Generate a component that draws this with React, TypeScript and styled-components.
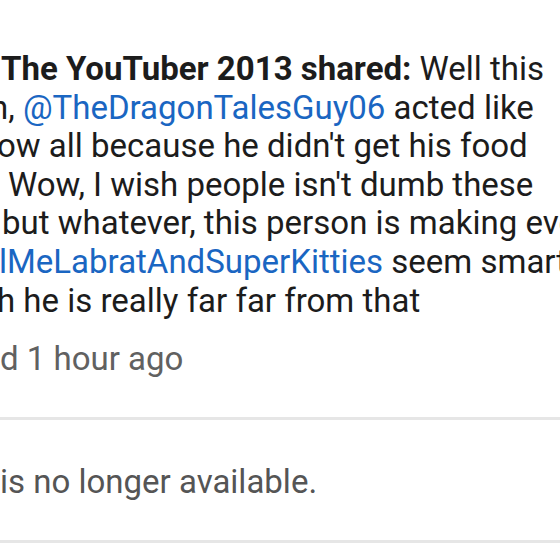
import React from "react";
import styled, { createGlobalStyle } from "styled-components";

const Global = createGlobalStyle`
  html, body { margin: 0; padding: 0; background: #ffffff; }
  body { width: 560px; height: 560px; overflow: hidden; }
`;

const Page = styled.div`
  width: 560px;
  height: 560px;
  overflow: hidden;
  background: #ffffff;
  font-family: Roboto, "Noto Sans", sans-serif;
  font-size: 33px;
  line-height: 38.6px;
  display: flex;
  flex-direction: column;
`;

const Post = styled.section`
  display: flex;
  flex-direction: column;
  padding-top: 50px;
`;

const Body = styled.div`
  display: flex;
  flex-direction: column;
  color: #1c1c1c;
`;

const Line = styled.div<{ $shift: number }>`
  white-space: nowrap;
  margin-left: ${(p) => p.$shift}px;
`;

const Author = styled.strong`
  font-weight: 700;
  color: #1c1c1c;
`;

const Mention = styled.span`
  color: #1a66c2;
`;

const Meta = styled.div`
  margin-top: 20px;
  color: #616161;
  white-space: nowrap;
`;

const Divider = styled.hr<{ $gap?: number }>`
  border: none;
  height: 3px;
  background: #e6e6e6;
  margin: ${(p) => p.$gap ?? 0}px 0 0 0;
  flex: none;
`;

const Unavailable = styled.div`
  padding: 43px 0 39px 0;
  color: #555555;
  white-space: nowrap;
`;

export default function App() {
  return (
    <>
      <Global />
      <Page>
        <Post>
          <Body>
            <Line $shift={1}>
              <Author>The YouTuber 2013 shared:</Author> Well this
            </Line>
            <Line $shift={-10}>
              n, <Mention>@TheDragonTalesGuy06</Mention> acted like
            </Line>
            <Line $shift={-3}>ow all because he didn't get his food</Line>
            <Line $shift={8}>Wow, I wish people isn't dumb these</Line>
            <Line $shift={2}>but whatever, this person is making everyone</Line>
            <Line $shift={-1}>
              <Mention>lMeLabratAndSuperKitties</Mention> seem smart even
            </Line>
            <Line $shift={-3}>h he is really far far from that</Line>
          </Body>
          <Meta>d 1 hour ago</Meta>
        </Post>
        <Divider $gap={38} />
        <Unavailable>is no longer available.</Unavailable>
        <Divider />
      </Page>
    </>
  );
}
